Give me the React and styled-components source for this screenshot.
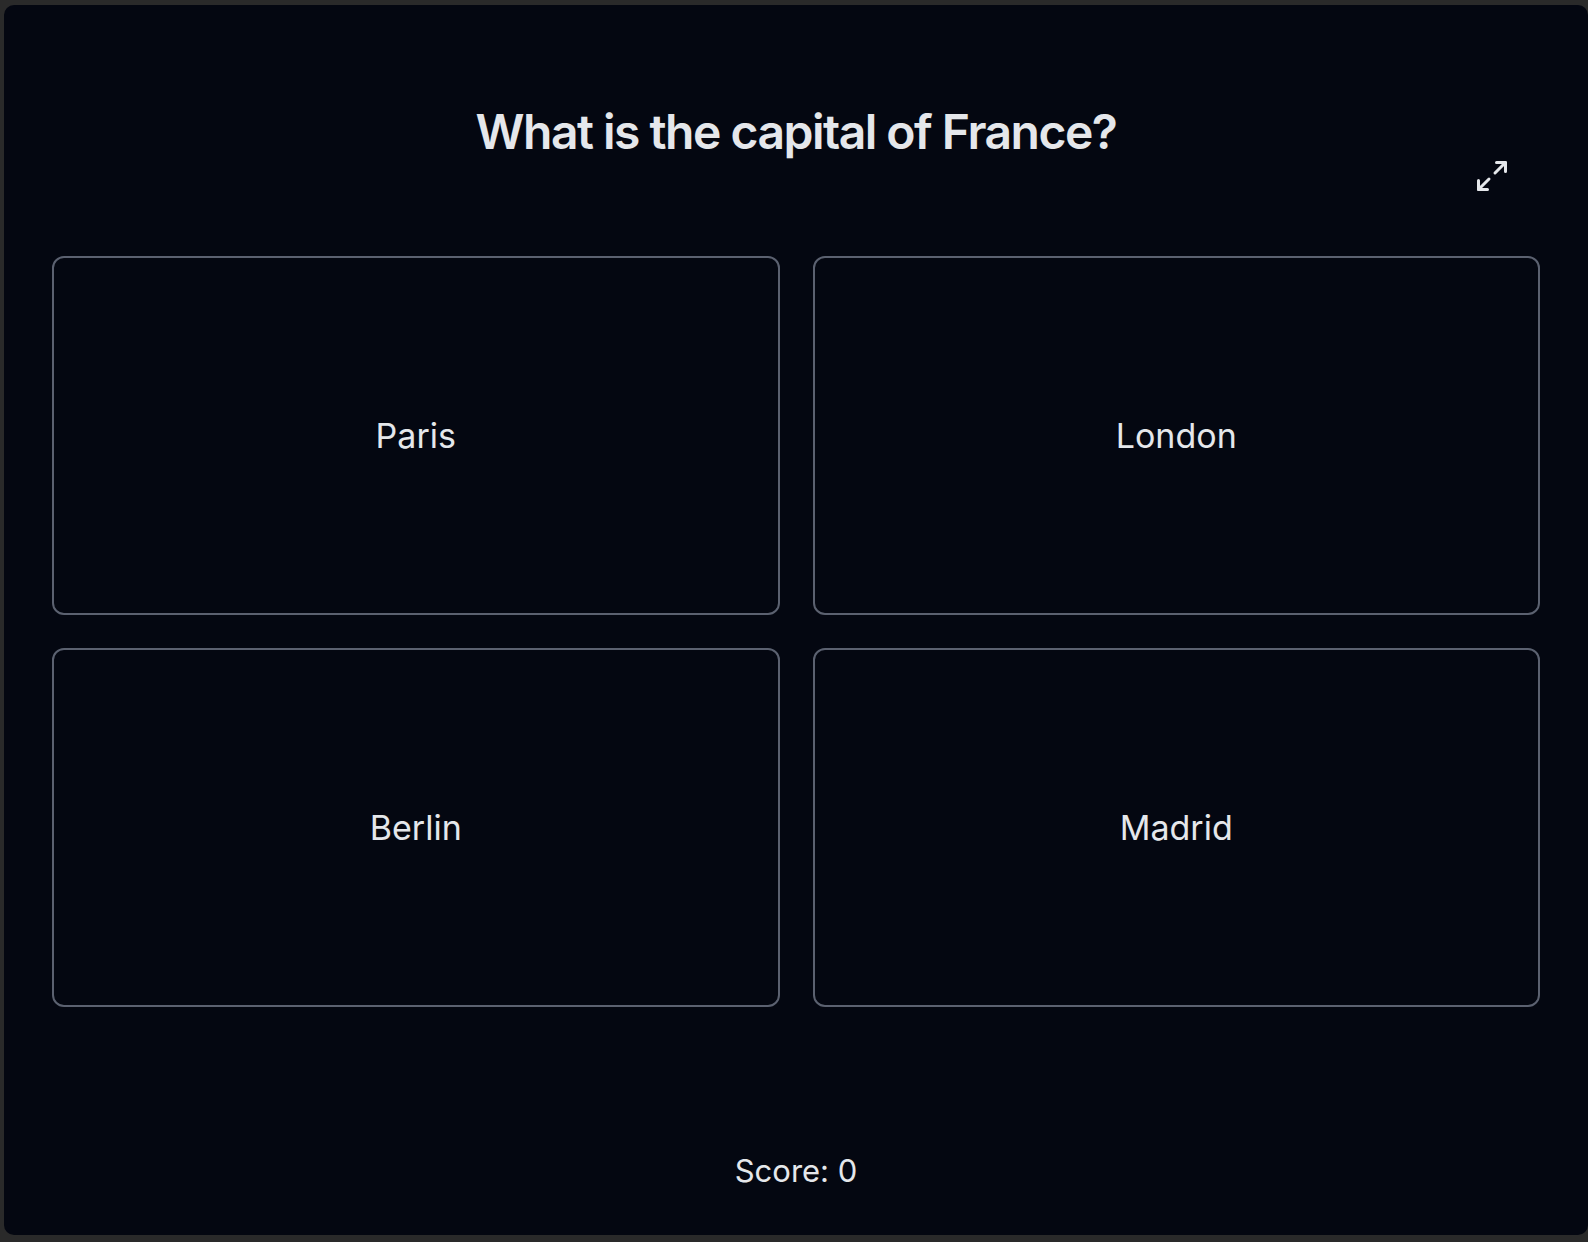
import styled, { createGlobalStyle } from "styled-components";
import { Maximize2 } from "lucide-react";

const GlobalStyle = createGlobalStyle`
  html, body {
    margin: 0;
    padding: 0;
    background: #2a2a2a;
  }
  body {
    font-family: Inter, "Noto Sans", sans-serif;
  }
`;

const Frame = styled.div`
  width: 1588px;
  height: 1242px;
  padding: 5px 0 7px 4px;
  box-sizing: border-box;
  overflow: hidden;
`;

const Panel = styled.div`
  height: 100%;
  background: #040711;
  border-radius: 10px;
  box-sizing: border-box;
  padding: 103px 48px 0 48px;
  display: flex;
  flex-direction: column;
  color: #e5e7eb;
`;

const Title = styled.h1`
  margin: 0;
  font-size: 48px;
  line-height: 48px;
  font-weight: 600;
  text-align: center;
  letter-spacing: -1.5px;
`;

const ToolRow = styled.div`
  display: flex;
  justify-content: flex-end;
  padding-right: 30px;
  margin-top: 2px;
  height: 36px;
`;

const IconButton = styled.button`
  background: none;
  border: none;
  padding: 0;
  width: 36px;
  height: 36px;
  color: #e5e7eb;
  display: flex;
  align-items: center;
  justify-content: center;
  cursor: pointer;
`;

const Grid = styled.div`
  margin-top: 62px;
  display: grid;
  grid-template-columns: 1fr 1fr;
  grid-auto-rows: 359px;
  gap: 33px;
`;

const Answer = styled.button`
  background: transparent;
  border: 2px solid #5b6170;
  border-radius: 12px;
  color: #e5e7eb;
  font-family: Inter, "Noto Sans", sans-serif;
  font-size: 34px;
  font-weight: 400;
  cursor: pointer;
  display: flex;
  align-items: center;
  justify-content: center;
`;

const Score = styled.div`
  margin-top: 146px;
  text-align: center;
  font-size: 31px;
  line-height: 36px;
`;

const answers = ["Paris", "London", "Berlin", "Madrid"];

const App = () => {
  return (
    <Frame>
      <GlobalStyle />
      <Panel>
        <Title>What is the capital of France?</Title>
        <ToolRow>
          <IconButton aria-label="Fullscreen">
            <Maximize2 size={36} strokeWidth={2} />
          </IconButton>
        </ToolRow>
        <Grid>
          {answers.map((a) => (
            <Answer key={a}>{a}</Answer>
          ))}
        </Grid>
        <Score>Score: 0</Score>
      </Panel>
    </Frame>
  );
};

export default App;
